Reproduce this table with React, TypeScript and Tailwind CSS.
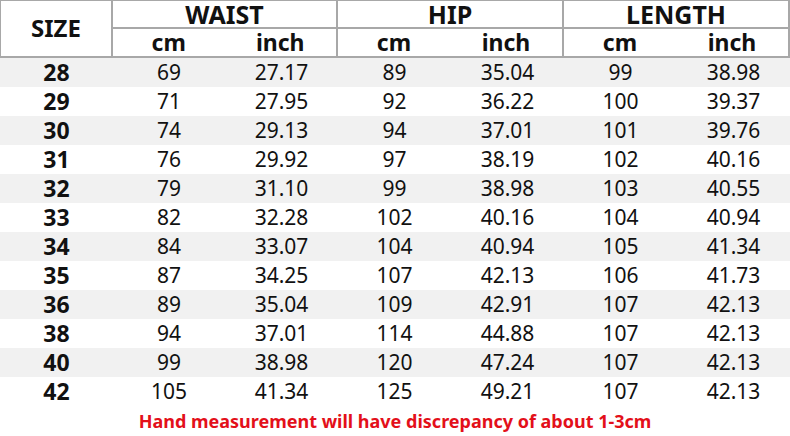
import React from "react";

const rows: [string, string, string, string, string, string, string][] = [
  ["28", "69", "27.17", "89", "35.04", "99", "38.98"],
  ["29", "71", "27.95", "92", "36.22", "100", "39.37"],
  ["30", "74", "29.13", "94", "37.01", "101", "39.76"],
  ["31", "76", "29.92", "97", "38.19", "102", "40.16"],
  ["32", "79", "31.10", "99", "38.98", "103", "40.55"],
  ["33", "82", "32.28", "102", "40.16", "104", "40.94"],
  ["34", "84", "33.07", "104", "40.94", "105", "41.34"],
  ["35", "87", "34.25", "107", "42.13", "106", "41.73"],
  ["36", "89", "35.04", "109", "42.91", "107", "42.13"],
  ["38", "94", "37.01", "114", "44.88", "107", "42.13"],
  ["40", "99", "38.98", "120", "47.24", "107", "42.13"],
  ["42", "105", "41.34", "125", "49.21", "107", "42.13"],
];

const widths = ["w-[113px]", "w-[112px]", "w-[113px]", "w-[113px]", "w-[113px]", "w-[113px]", "w-[113px]"];

function Group({ title, w }: { title: string; w: string }) {
  return (
    <div className={`${w} flex flex-col border-r-2 border-b-2 border-[#a8a8a8]`}>
      <div className="h-[28px] border-b-2 border-[#a8a8a8] flex items-center justify-center">
        <span className="text-[25px] font-bold leading-[26px] text-[#111] whitespace-nowrap">{title}</span>
      </div>
      <div className="flex-1 flex">
        <div className="w-1/2 flex items-center justify-center text-[23px] font-bold leading-none text-[#111]">cm</div>
        <div className="w-1/2 flex items-center justify-center text-[23px] font-bold leading-none text-[#111]">inch</div>
      </div>
    </div>
  );
}

export default function App() {
  return (
    <div
      className="w-[790px] h-[436px] bg-white overflow-hidden"
      style={{ fontFamily: '"Noto Sans", "Open Sans", sans-serif' }}
    >
      <div className="flex h-[58px] border-t border-l border-[#a8a8a8]">
        <div className="w-[112px] border-r-2 border-b-2 border-[#a8a8a8] flex items-center justify-center text-[24px] font-bold leading-none text-[#111] pb-[2px]">
          SIZE
        </div>
        <Group title="WAIST" w="w-[225px]" />
        <Group title="HIP" w="w-[226px]" />
        <Group title="LENGTH" w="w-[226px]" />
      </div>
      <div className="flex flex-col">
        {rows.map((r, i) => (
          <div key={r[0]} className={`flex h-[29px] ${i % 2 === 0 ? "bg-[#f1f1f1]" : "bg-white"}`}>
            {r.map((c, j) => (
              <div
                key={j}
                className={`${widths[j]} flex items-center justify-center leading-none text-[#111] ${
                  j === 0 ? "text-[23px] font-bold" : "text-[21px]"
                }`}
              >
                {c}
              </div>
            ))}
          </div>
        ))}
      </div>
      <div className="h-[30px] flex items-center justify-center text-[18px] font-bold text-[#e3101a] leading-none pb-[1px]">
        Hand measurement will have discrepancy of about 1-3cm
      </div>
    </div>
  );
}
